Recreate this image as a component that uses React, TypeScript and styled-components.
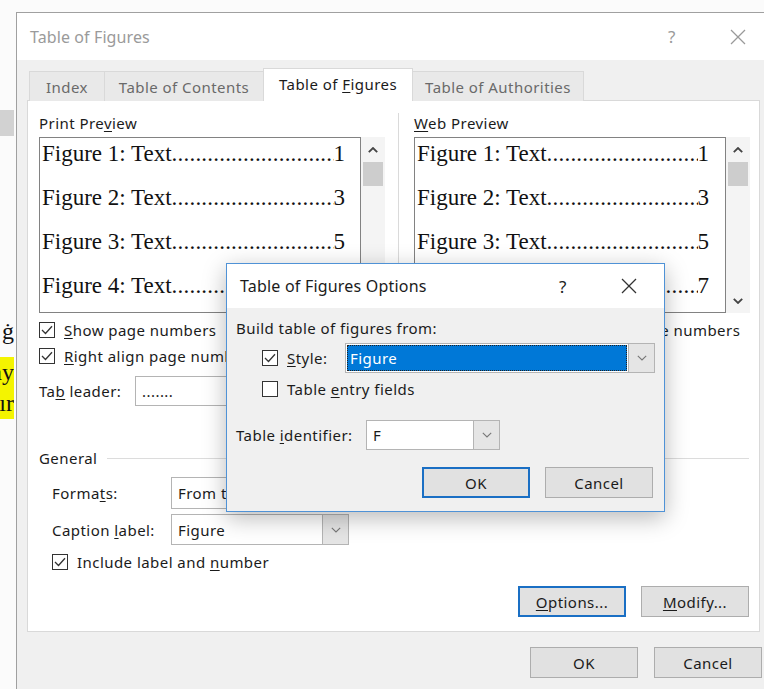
import styled, { createGlobalStyle, css } from 'styled-components'

const GlobalStyle = createGlobalStyle`
  html, body {
    margin: 0;
    padding: 0;
    background: #ffffff;
    overflow: hidden;
  }
  body {
    font-family: 'Noto Sans', 'Open Sans', sans-serif;
    font-size: 15px;
    letter-spacing: 0.45px;
    color: #1b1b1b;
  }
`

// --- small shared widgets ---------------------------------------------

const Key = styled.span`
  text-decoration: underline;
  text-underline-offset: 2px;
`

const Box = styled.span`
  width: 16px;
  height: 16px;
  box-sizing: border-box;
  border: 1px solid #333;
  background: #fff;
  display: inline-flex;
  align-items: center;
  justify-content: center;
  flex: none;
`

const Checkbox = ({ checked }: { checked?: boolean }) => (
  <Box>
    {checked && (
      <svg width="12" height="10" viewBox="0 0 12 10">
        <polyline points="1,5 4.5,8.5 11,1.2" fill="none" stroke="#333" strokeWidth="1.3" />
      </svg>
    )}
  </Box>
)

const Chevron = ({ up, bold }: { up?: boolean; bold?: boolean }) => (
  <svg width="10" height="6" viewBox="0 0 10 6">
    <polyline
      points={up ? '0.8,5.2 5,1 9.2,5.2' : '0.8,0.8 5,5 9.2,0.8'}
      fill="none"
      stroke={bold ? '#444' : '#777'}
      strokeWidth={bold ? 1.8 : 1.1}
    />
  </svg>
)

const CloseGlyph = ({ color }: { color: string }) => (
  <svg width="16" height="16" viewBox="0 0 16 16">
    <line x1="1" y1="1" x2="15" y2="15" stroke={color} strokeWidth="1.2" />
    <line x1="15" y1="1" x2="1" y2="15" stroke={color} strokeWidth="1.2" />
  </svg>
)

const SelectBox = styled.div<{ $w: number; $h?: number }>`
  width: ${p => p.$w}px;
  height: ${p => p.$h ?? 30}px;
  box-sizing: border-box;
  border: 1px solid #b4b4b4;
  background: #fff;
  display: flex;
  align-items: stretch;
  flex: none;
`

const SelectValue = styled.div<{ $selected?: boolean }>`
  flex: 1;
  display: flex;
  align-items: center;
  padding-left: 6px;
  white-space: nowrap;
  overflow: hidden;
  ${p =>
    p.$selected &&
    css`
      background: #0078d7;
      color: #fff;
      margin: 1px;
      outline: 1px dotted #222;
      outline-offset: -1px;
      padding-left: 3px;
    `}
`

const SelectArrow = styled.div`
  width: 25px;
  flex: none;
  border-left: 1px solid #b4b4b4;
  background: #e5e5e5;
  display: flex;
  align-items: center;
  justify-content: center;
`

const Select = ({ w, h, value, selected }: { w: number; h?: number; value: string; selected?: boolean }) => (
  <SelectBox $w={w} $h={h}>
    <SelectValue $selected={selected}>{value}</SelectValue>
    <SelectArrow>
      <Chevron />
    </SelectArrow>
  </SelectBox>
)

const Button = styled.div<{ $default?: boolean }>`
  width: 108px;
  height: 31px;
  box-sizing: border-box;
  background: #e1e1e1;
  border: 1px solid #adadad;
  display: flex;
  align-items: center;
  justify-content: center;
  flex: none;
  color: #1b1b1b;
  ${p =>
    p.$default &&
    css`
      border: 2px solid #1a6fc4;
    `}
`

// --- document behind the dialog ----------------------------------------

const Desktop = styled.div`
  position: relative;
  width: 764px;
  height: 689px;
  overflow: hidden;
  background: #fbfbfb;
  display: flex;
  align-items: flex-start;
`

const DocEdge = styled.div`
  width: 16px;
  flex: none;
  padding-top: 110px;
  display: flex;
  flex-direction: column;
  overflow: hidden;
`

const RulerBit = styled.div`
  width: 14px;
  height: 26px;
  background: #d2d2d2;
`

const DocLine = styled.div<{ $mark?: boolean; $top?: number }>`
  margin-top: ${p => p.$top ?? 0}px;
  width: 14px;
  height: 31px;
  display: flex;
  justify-content: flex-end;
  align-items: center;
  overflow: hidden;
  font-family: 'Liberation Serif', serif;
  font-size: 24px;
  letter-spacing: 0;
  color: #111;
  white-space: nowrap;
  background: ${p => (p.$mark ? '#f4f400' : 'transparent')};
`

// --- main dialog -------------------------------------------------------

const Window = styled.div`
  margin-top: 12px;
  width: 770px;
  flex: none;
  height: 700px;
  box-sizing: border-box;
  border: 1px solid #a0a0a0;
  background: #f0f0f0;
  display: flex;
  flex-direction: column;
`

const TitleBar = styled.div`
  height: 47px;
  flex: none;
  background: #fff;
  display: flex;
  align-items: center;
  padding-left: 13px;
`

const Title = styled.div<{ $inactive?: boolean }>`
  font-size: 16px;
  letter-spacing: ${p => (p.$inactive ? 0.1 : 0.2)}px;
  color: ${p => (p.$inactive ? '#9a9a9a' : '#1b1b1b')};
  flex: 1;
`

const TitleButton = styled.div<{ $w: number; $color: string }>`
  width: ${p => p.$w}px;
  height: 100%;
  display: flex;
  align-items: center;
  justify-content: center;
  color: ${p => p.$color};
  font-size: 17px;
  flex: none;
`

const Body = styled.div`
  padding: 8px 0 0 10px;
  display: flex;
  flex-direction: column;
`

const TabRow = styled.div`
  display: flex;
  align-items: flex-end;
  padding-left: 2px;
  height: 33px;
  position: relative;
  z-index: 1;
  margin-bottom: -1px;
`

const Tab = styled.div<{ $w: number; $active?: boolean }>`
  width: ${p => p.$w}px;
  box-sizing: border-box;
  height: 30px;
  border: 1px solid #d9d9d9;
  border-bottom: none;
  margin-right: -1px;
  background: #e9e9e9;
  color: #6a6a6a;
  display: flex;
  align-items: center;
  justify-content: center;
  white-space: nowrap;
  ${p =>
    p.$active &&
    css`
      height: 33px;
      background: #fff;
      color: #1b1b1b;
      padding-bottom: 3px;
    `}
`

const Panel = styled.div`
  width: 733px;
  height: 532px;
  box-sizing: border-box;
  border: 1px solid #d9d9d9;
  background: #fff;
  padding: 12px 10px 0 11px;
  display: flex;
  flex-direction: column;
`

const TopGrid = styled.div`
  display: grid;
  grid-template-columns: 346px 29px 336px;
`

const Column = styled.div`
  display: flex;
  flex-direction: column;
`

const Divider = styled.div`
  margin-left: 13px;
  border-left: 1px solid #dadada;
`

const FieldLabel = styled.div`
  height: 20px;
  line-height: 20px;
  white-space: nowrap;
`

const PreviewWrap = styled.div`
  margin-top: 4px;
  height: 176px;
  display: flex;
`

const PreviewBox = styled.div<{ $pad: number }>`
  flex: 1;
  box-sizing: border-box;
  border: 1px solid #828282;
  padding: 0 ${p => p.$pad}px 0 2px;
  display: flex;
  flex-direction: column;
  gap: 12px;
  overflow: hidden;
  font-family: 'Liberation Serif', 'Times New Roman', serif;
  font-size: 23px;
  letter-spacing: 0;
  color: #111;
`

const LeaderLine = styled.div`
  height: 32px;
  line-height: 32px;
  display: flex;
  white-space: nowrap;
`

const Dots = styled.span`
  flex: 1;
  overflow: hidden;
  letter-spacing: 0.2px;
`

const ScrollTrack = styled.div`
  width: 24px;
  flex: none;
  background: #f4f4f4;
  display: flex;
  flex-direction: column;
  align-items: center;
`

const ScrollArrow = styled.div`
  height: 25px;
  display: flex;
  align-items: center;
  justify-content: center;
`

const ScrollThumb = styled.div`
  width: 20px;
  height: 24px;
  background: #cdcdcd;
  flex: none;
`

const ScrollGap = styled.div`
  flex: 1;
`

const CheckRow = styled.div<{ $indent?: number; $top?: number }>`
  height: 26px;
  display: flex;
  align-items: center;
  gap: 9px;
  margin-left: ${p => p.$indent ?? 0}px;
  margin-top: ${p => p.$top ?? 0}px;
  white-space: nowrap;
`

const FormRow = styled.div<{ $label: number; $top?: number; $indent?: number }>`
  display: grid;
  grid-template-columns: ${p => p.$label}px auto;
  align-items: center;
  margin-top: ${p => p.$top ?? 0}px;
  margin-left: ${p => p.$indent ?? 0}px;
  white-space: nowrap;
`

const GroupHead = styled.div`
  margin-top: 42px;
  height: 20px;
  display: flex;
  align-items: center;
  gap: 10px;
  &::after {
    content: '';
    flex: 1;
    border-top: 1px solid #dcdcdc;
  }
`

const ButtonRow = styled.div<{ $top: number; $gap: number }>`
  margin-top: ${p => p.$top}px;
  display: flex;
  justify-content: flex-end;
  gap: ${p => p.$gap}px;
`

const Footer = styled.div`
  margin-top: 15px;
  padding-left: 503px;
  display: flex;
  gap: 16px;
`

// --- options dialog on top ---------------------------------------------

const OptionsWindow = styled.div`
  position: absolute;
  left: 226px;
  top: 263px;
  width: 439px;
  height: 249px;
  box-sizing: border-box;
  border: 1px solid #4f92d6;
  background: #f0f0f0;
  box-shadow: 0 6px 22px rgba(0, 0, 0, 0.28);
  display: flex;
  flex-direction: column;
`

const OptionsTitleBar = styled(TitleBar)`
  height: 44px;
  padding-left: 13px;
`

const OptionsBody = styled.div`
  padding: 10px 11px 0 9px;
  display: flex;
  flex-direction: column;
`

type Entry = { label: string; page: string }

const entries: Entry[] = [
  { label: 'Figure 1: Text', page: '1' },
  { label: 'Figure 2: Text', page: '3' },
  { label: 'Figure 3: Text', page: '5' },
  { label: 'Figure 4: Text', page: '7' },
]

const leader = '.'.repeat(80)

const Preview = ({ pad }: { pad: number }) => (
  <PreviewWrap>
    <PreviewBox $pad={pad}>
      {entries.map(e => (
        <LeaderLine key={e.label}>
          <span>{e.label}</span>
          <Dots>{leader}</Dots>
          <span>{e.page}</span>
        </LeaderLine>
      ))}
    </PreviewBox>
    <ScrollTrack>
      <ScrollArrow>
        <Chevron up bold />
      </ScrollArrow>
      <ScrollThumb />
      <ScrollGap />
      <ScrollArrow>
        <Chevron bold />
      </ScrollArrow>
    </ScrollTrack>
  </PreviewWrap>
)

export default function App() {
  return (
    <Desktop>
      <GlobalStyle />
      <DocEdge>
        <RulerBit />
        <DocLine $top={180}>ġ</DocLine>
        <DocLine $top={10} $mark>
          day
        </DocLine>
        <DocLine $mark>ır</DocLine>
      </DocEdge>

      <Window>
        <TitleBar>
          <Title $inactive>Table of Figures</Title>
          <TitleButton $w={46} $color="#9a9a9a">?</TitleButton>
          <TitleButton $w={20} $color="#9a9a9a" />
          <TitleButton $w={46} $color="#9a9a9a">
            <CloseGlyph color="#9a9a9a" />
          </TitleButton>
          <TitleButton $w={24} $color="#9a9a9a" />
        </TitleBar>

        <Body>
          <TabRow>
            <Tab $w={76}>Index</Tab>
            <Tab $w={160}>Table of Contents</Tab>
            <Tab $w={150} $active>
              <span>
                Table of <Key>F</Key>igures
              </span>
            </Tab>
            <Tab $w={172}>Table of Authorities</Tab>
          </TabRow>

          <Panel>
            <TopGrid>
              <Column>
                <FieldLabel>
                  Print Pre<Key>v</Key>iew
                </FieldLabel>
                <Preview pad={15} />
                <CheckRow $top={4}>
                  <Checkbox checked />
                  <span>
                    <Key>S</Key>how page numbers
                  </span>
                </CheckRow>
                <CheckRow>
                  <Checkbox checked />
                  <span>
                    <Key>R</Key>ight align page numbers
                  </span>
                </CheckRow>
                <FormRow $label={96} $top={7}>
                  <span>
                    Ta<Key>b</Key> leader:
                  </span>
                  <Select w={150} value="......." />
                </FormRow>
              </Column>
              <Divider />
              <Column>
                <FieldLabel>
                  <Key>W</Key>eb Preview
                </FieldLabel>
                <Preview pad={16} />
                <CheckRow $top={4}>
                  <Checkbox checked />
                  <span>
                    Use <Key>h</Key>yperlinks instead of page numbers
                  </span>
                </CheckRow>
              </Column>
            </TopGrid>

            <GroupHead>General</GroupHead>
            <FormRow $label={119} $indent={13} $top={9}>
              <span>
                Forma<Key>t</Key>s:
              </span>
              <Select w={178} h={32} value="From template" />
            </FormRow>
            <FormRow $label={119} $indent={13} $top={5}>
              <span>
                Caption <Key>l</Key>abel:
              </span>
              <Select w={178} h={31} value="Figure" />
            </FormRow>
            <CheckRow $indent={13} $top={4}>
              <Checkbox checked />
              <span>
                Include label and <Key>n</Key>umber
              </span>
            </CheckRow>

            <ButtonRow $top={11} $gap={15}>
              <Button $default>
                <span>
                  <Key>O</Key>ptions...
                </span>
              </Button>
              <Button>
                <span>
                  <Key>M</Key>odify...
                </span>
              </Button>
            </ButtonRow>
          </Panel>

          <Footer>
            <Button>OK</Button>
            <Button>Cancel</Button>
          </Footer>
        </Body>
      </Window>

      <OptionsWindow>
        <OptionsTitleBar>
          <Title>Table of Figures Options</Title>
          <TitleButton $w={46} $color="#222">?</TitleButton>
          <TitleButton $w={20} $color="#222" />
          <TitleButton $w={46} $color="#222">
            <CloseGlyph color="#333" />
          </TitleButton>
          <TitleButton $w={12} $color="#222" />
        </OptionsTitleBar>
        <OptionsBody>
          <FieldLabel>Build table of figures from:</FieldLabel>
          <FormRow $label={83} $indent={26} $top={5}>
            <CheckRow>
              <Checkbox checked />
              <span>
                <Key>S</Key>tyle:
              </span>
            </CheckRow>
            <Select w={310} value="Figure" selected />
          </FormRow>
          <CheckRow $indent={26} $top={3}>
            <Checkbox />
            <span>
              Table <Key>e</Key>ntry fields
            </span>
          </CheckRow>
          <FormRow $label={130} $top={18}>
            <span>
              Table <Key>i</Key>dentifier:
            </span>
            <Select w={134} value="F" />
          </FormRow>
          <ButtonRow $top={17} $gap={15}>
            <Button $default>OK</Button>
            <Button>Cancel</Button>
          </ButtonRow>
        </OptionsBody>
      </OptionsWindow>
    </Desktop>
  )
}
